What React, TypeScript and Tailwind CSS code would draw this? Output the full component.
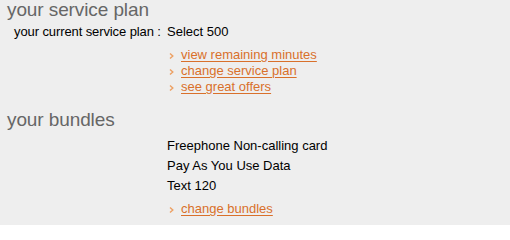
import React from "react";

const links = ["view remaining minutes", "change service plan", "see great offers"];
const bundles = ["Freephone Non-calling card", "Pay As You Use Data", "Text 120"];

function Arrow() {
  return (
    <svg width="5" height="6" viewBox="0 0 5 6" className="block shrink-0">
      <path d="M1 0.5 L3.8 3 L1 5.5" fill="none" stroke="#eda063" strokeWidth="1.4" />
    </svg>
  );
}

function LinkRow({ label }: { label: string }) {
  return (
    <div className="flex items-center h-[16px]">
      <span className="w-[14px] flex items-center pl-[2px] pt-[2px]">
        <Arrow />
      </span>
      <a href="#" className="leading-[16px] text-[#d9702b] underline underline-offset-[2px] decoration-[#d9702b]">
        {label}
      </a>
    </div>
  );
}

export default function App() {
  return (
    <div className="w-[510px] h-[225px] bg-[#eeeeee] overflow-hidden text-black font-['Liberation_Sans',Arial,sans-serif]">
      <h2 className="pt-[1px] text-[19px] leading-[17px] text-[#666666] pl-[7px] tracking-[-0.1px]">your service plan</h2>

      <div className="mt-[6px] grid grid-cols-[167px_1fr] text-[13px] leading-[16px]">
        <div className="pl-[14px] tracking-[-0.1px]">your current service plan :</div>
        <div>Select 500</div>
      </div>

      <div className="mt-[7px] ml-[167px] text-[13px] leading-[16px]">
        {links.map((l) => (
          <LinkRow key={l} label={l} />
        ))}
      </div>

      <h2 className="mt-[16px] text-[19px] leading-[17px] text-[#666666] pl-[7px] tracking-[-0.1px]">your bundles</h2>

      <div className="mt-[8px] ml-[167px] text-[13px]">
        {bundles.map((b) => (
          <div key={b} className="leading-[20px]">
            {b}
          </div>
        ))}
        <div className="mt-[5px] leading-[16px]">
          <LinkRow label="change bundles" />
        </div>
      </div>
    </div>
  );
}
